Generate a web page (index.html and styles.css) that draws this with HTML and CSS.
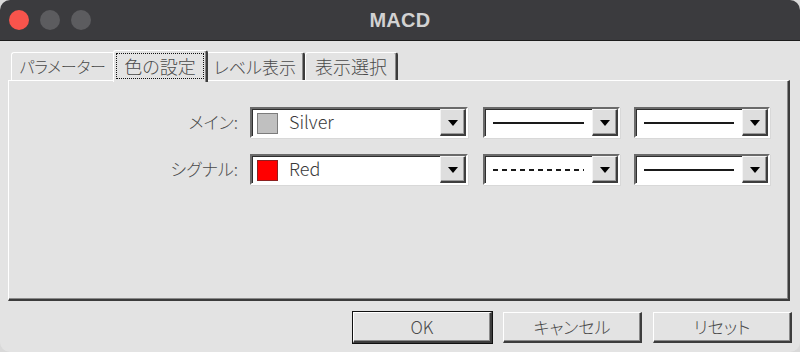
FILE: index.html
```html
<!DOCTYPE html>
<html lang="ja">
<head>
<meta charset="utf-8">
<title>MACD</title>
<link rel="stylesheet" href="styles.css">
</head>
<body>
<div class="window">
  <header class="titlebar">
    <div class="lights">
      <span class="light light-close"></span>
      <span class="light light-min"></span>
      <span class="light light-max"></span>
    </div>
    <div class="title">MACD</div>
    <div></div>
  </header>
  <main class="content">
    <nav class="tabs">
      <div class="tab tab-params">パラメーター</div>
      <div class="tab tab-colors active"><span class="focus">色の設定</span></div>
      <div class="tab tab-level">レベル表示</div>
      <div class="tab tab-select">表示選択</div>
    </nav>
    <section class="panel">
      <div class="row">
        <label class="label">メイン:</label>
        <div class="combo combo-color">
          <div class="field"><span class="swatch swatch-silver"></span><span class="name">Silver</span></div>
          <span class="arrow"><i></i></span>
        </div>
        <div class="combo combo-line">
          <div class="field"><span class="line line-solid"></span></div>
          <span class="arrow"><i></i></span>
        </div>
        <div class="combo combo-width">
          <div class="field"><span class="line line-solid"></span></div>
          <span class="arrow"><i></i></span>
        </div>
      </div>
      <div class="row">
        <label class="label">シグナル:</label>
        <div class="combo combo-color">
          <div class="field"><span class="swatch swatch-red"></span><span class="name">Red</span></div>
          <span class="arrow"><i></i></span>
        </div>
        <div class="combo combo-line">
          <div class="field"><span class="line line-dashed"></span></div>
          <span class="arrow"><i></i></span>
        </div>
        <div class="combo combo-width">
          <div class="field"><span class="line line-solid"></span></div>
          <span class="arrow"><i></i></span>
        </div>
      </div>
    </section>
    <footer class="buttons">
      <button class="btn btn-default">OK</button>
      <button class="btn">キャンセル</button>
      <button class="btn">リセット</button>
    </footer>
  </main>
</div>
</body>
</html>
```

FILE: styles.css
```css
html, body {
  margin: 0;
  padding: 0;
  background: #d9d9d9;
}

body {
  font-family: "Noto Sans CJK JP", "Noto Sans", sans-serif;
  font-feature-settings: "palt";
  font-weight: 300;
  color: #4a4a4a;
}

.window {
  width: 800px;
  height: 352px;
  background: #e3e3e3;
  border-radius: 10px;
  overflow: hidden;
  display: flex;
  flex-direction: column;
}

/* Title bar */
.titlebar {
  height: 40px;
  flex: none;
  background: #3b3b3e;
  border-bottom: 1px solid #1c1c1c;
  display: grid;
  grid-template-columns: 1fr auto 1fr;
  align-items: center;
}

.lights {
  display: flex;
  gap: 11px;
  padding-left: 9px;
}

.light {
  width: 20px;
  height: 20px;
  border-radius: 50%;
  background: #5c5c5f;
}

.light-close {
  background: #f8544c;
}

.title {
  font-family: "Liberation Sans", Arial, sans-serif;
  font-weight: bold;
  font-size: 20px;
  color: #d2d2d2;
  letter-spacing: 0.3px;
}

/* Content */
.content {
  flex: 1;
  padding: 9px 10px 0 8px;
  display: flex;
  flex-direction: column;
}

.tabs {
  height: 30px;
  display: flex;
  align-items: flex-end;
  padding-left: 3px;
}

.tab {
  height: 28px;
  box-sizing: border-box;
  display: flex;
  align-items: center;
  justify-content: center;
  padding-bottom: 1px;
  font-size: 18px;
  color: #4a4a4a;
  background: #e3e3e3;
  border-top: 1px solid #ffffff;
  border-left: 1px solid #ffffff;
  border-right: 2px solid #3c3c3c;
  border-radius: 3px 3px 0 0;
  box-shadow: inset -1px 0 0 #8a8a8a;
}

.tab-params {
  width: 104px;
  font-size: 16px;
  letter-spacing: -0.3px;
  border-right-color: transparent;
  box-shadow: none;
}

.tab-colors {
  width: 95px;
}

.tab-level {
  width: 99px;
  font-size: 17px;
}

.tab-select {
  width: 93px;
}

.tab.active {
  height: 32px;
  margin: 0 -2px -2px -2px;
  padding: 2px 2px 3px 2px;
  position: relative;
  z-index: 1;
}

.focus {
  flex: 1;
  align-self: stretch;
  display: flex;
  align-items: center;
  justify-content: center;
  padding-bottom: 1px;
  border: 1px dotted #111;
}

.panel {
  height: 221px;
  box-sizing: border-box;
  border-top: 1px solid #ffffff;
  border-left: 1px solid #ffffff;
  border-right: 2px solid #3c3c3c;
  border-bottom: 2px solid #3c3c3c;
  box-shadow: inset -1px -1px 0 #8a8a8a;
  padding-top: 26px;
  display: flex;
  flex-direction: column;
  gap: 16px;
}

.row {
  height: 31px;
  display: flex;
  align-items: center;
}

.label {
  width: 229px;
  text-align: right;
  font-size: 17px;
  color: #4a4a4a;
  padding-bottom: 3px;
}

.combo {
  height: 31px;
  box-sizing: border-box;
  background: #ffffff;
  border: 2px solid;
  border-color: #6a6a6a #ffffff #ffffff #6a6a6a;
  box-shadow: inset 1px 1px 0 #2e2e2e, 1px 1px 0 #d8d8d8;
  display: flex;
}

.combo-color {
  width: 218px;
  margin-left: 12px;
}

.combo-line {
  width: 137px;
  margin-left: 15px;
}

.combo-width {
  width: 136px;
  margin-left: 14px;
}

.field {
  flex: 1;
  display: flex;
  align-items: center;
  padding-left: 5px;
}

.swatch {
  width: 19px;
  height: 19px;
  border: 1px solid #7c7c7c;
  margin-top: 1px;
}

.swatch-silver {
  background: #c0c0c0;
}

.swatch-red {
  background: #ff0000;
  border-color: #8c2020;
}

.name {
  margin-left: 11px;
  font-size: 18px;
  color: #3a3a3a;
  padding-bottom: 3px;
}

.line {
  flex: 1;
  height: 2px;
  margin: 1px 8px 0 3px;
  background: #1a1a1a;
}

.line-dashed {
  background: repeating-linear-gradient(to right, #1a1a1a 0 5px, transparent 5px 9px);
}

.arrow {
  width: 26px;
  box-sizing: border-box;
  background: #dedede;
  border-top: 1px solid #f4f4f4;
  border-left: 1px solid #f4f4f4;
  border-right: 2px solid #3e3e3e;
  border-bottom: 2px solid #3e3e3e;
  box-shadow: inset -1px -1px 0 #9a9a9a;
  display: flex;
  align-items: center;
  justify-content: center;
  padding-top: 1px;
}

.arrow i {
  width: 0;
  height: 0;
  border-left: 5px solid transparent;
  border-right: 5px solid transparent;
  border-top: 6px solid #000;
}

/* Buttons */
.buttons {
  display: flex;
  justify-content: flex-end;
  gap: 11px;
  margin-top: 11px;
  margin-right: -2px;
}

.btn {
  width: 139px;
  height: 31px;
  box-sizing: border-box;
  font-family: "Noto Sans CJK JP", "Noto Sans", sans-serif;
  font-feature-settings: "palt";
  font-weight: 300;
  font-size: 17px;
  color: #4a4a4a;
  background: #e3e3e3;
  border-top: 1px solid #ffffff;
  border-left: 1px solid #ffffff;
  border-right: 2px solid #3c3c3c;
  border-bottom: 2px solid #3c3c3c;
  box-shadow: inset -1px -1px 0 #8a8a8a;
  padding: 0 0 2px;
  line-height: 1;
}

.btn-default {
  outline: 1px solid #111;
  outline-offset: 0;
}
```
